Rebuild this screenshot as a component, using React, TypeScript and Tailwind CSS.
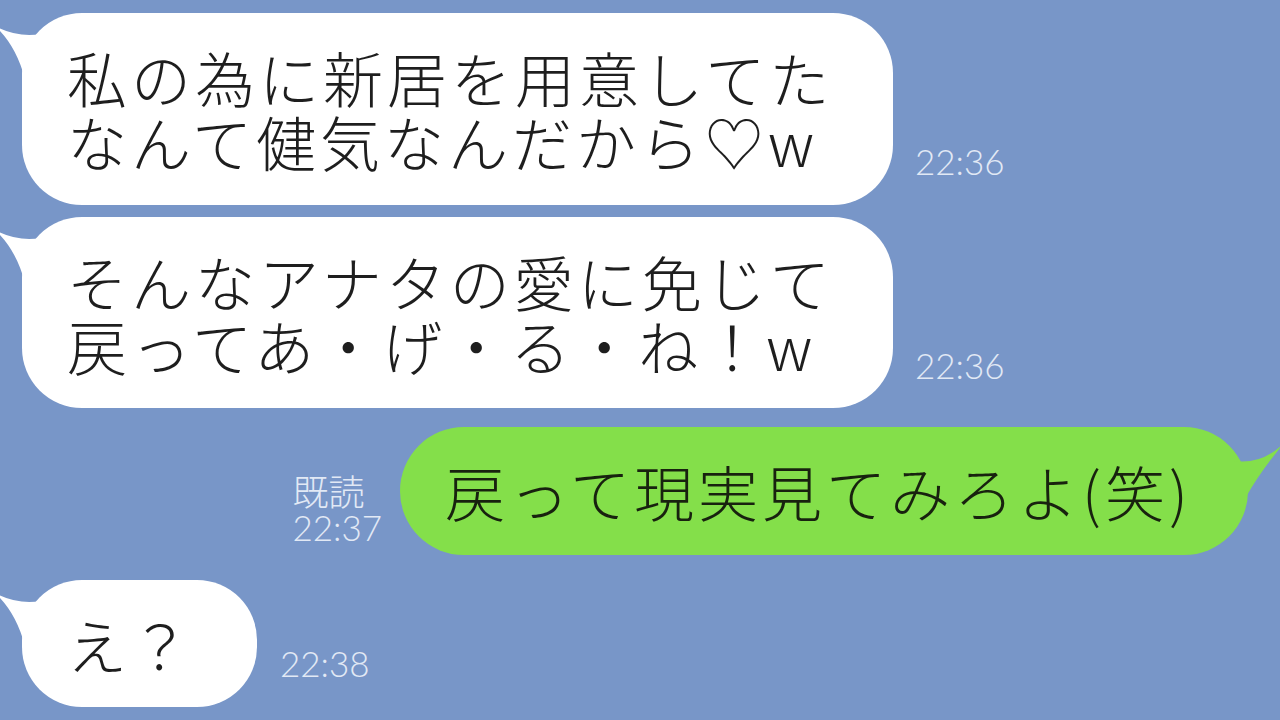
const JP = "font-['Noto_Sans_CJK_JP','Noto_Sans_CJK_SC',sans-serif]";

function LeftTail() {
  return (
    <svg className="absolute left-[-30px] top-0" width="70" height="70" viewBox="0 0 70 70">
      <path d="M3 13 Q30 28 62 18 L62 66 L33 66 Q24 32 3 13 Z" fill="#ffffff" />
    </svg>
  );
}

function RightTail() {
  return (
    <svg className="absolute right-[-40px] top-0" width="60" height="72" viewBox="0 0 60 72">
      <path d="M56 16 Q34 38 6 34 L6 70 L18 70 Q32 45 56 16 Z" fill="#84df4a" />
    </svg>
  );
}

function Time({ children, className = "" }: { children: React.ReactNode; className?: string }) {
  return (
    <span className={`font-['Lato',sans-serif] font-light text-[35px] leading-none text-[#e2e9f5] ${className}`}>
      {children}
    </span>
  );
}

export default function App() {
  return (
    <div className={`w-[1280px] h-[720px] overflow-hidden bg-[#7896c8] flex flex-col ${JP}`}>
      {/* received 1 */}
      <div className="flex items-end pl-[22px] pt-[13px]">
        <div className="relative w-[871px] h-[192px] rounded-[60px] bg-white flex flex-col justify-center pl-[45px]">
          <LeftTail />
          <p className="relative text-[60px] leading-[64px] tracking-[4px] text-[#1e1e1e] font-light">
            私の為に新居を用意してた
          </p>
          <p className="relative text-[60px] leading-[64px] tracking-[4px] text-[#1e1e1e] font-light">
            なんて健気なんだから♡w
          </p>
        </div>
        <Time className="ml-[22px] mb-[26px]">22:36</Time>
      </div>

      {/* received 2 */}
      <div className="flex items-end pl-[22px] mt-[12px]">
        <div className="relative w-[871px] h-[191px] rounded-[60px] bg-white flex flex-col justify-center pl-[45px]">
          <LeftTail />
          <p className="relative text-[60px] leading-[64px] tracking-[4px] text-[#1e1e1e] font-light">
            そんなアナタの愛に免じて
          </p>
          <p className="relative text-[60px] leading-[64px] tracking-[4px] text-[#1e1e1e] font-light">
            戻ってあ・げ・る・ね！w
          </p>
        </div>
        <Time className="ml-[22px] mb-[25px]">22:36</Time>
      </div>

      {/* sent */}
      <div className="flex items-end justify-end pr-[32px] mt-[19px]">
        <div className="flex flex-col items-start mr-[18px] mb-[10px]">
          <span className="text-[36px] leading-[40px] text-[#e2e9f5] font-light">既読</span>
          <Time>22:37</Time>
        </div>
        <div className="relative w-[848px] h-[128px] rounded-[64px] bg-[#84df4a] flex items-center pl-[45px]">
          <RightTail />
          <p className="relative text-[60px] leading-[64px] tracking-[4px] text-[#18220f] font-light">
            戻って現実見てみろよ(笑)
          </p>
        </div>
      </div>

      {/* received 3 */}
      <div className="flex items-end pl-[22px] mt-[25px]">
        <div className="relative w-[235px] h-[127px] rounded-[60px] bg-white flex items-center pl-[45px]">
          <LeftTail />
          <p className="relative text-[60px] leading-[64px] tracking-[3px] text-[#1e1e1e] font-light">え？</p>
        </div>
        <Time className="ml-[23px] mb-[26px]">22:38</Time>
      </div>
    </div>
  );
}
